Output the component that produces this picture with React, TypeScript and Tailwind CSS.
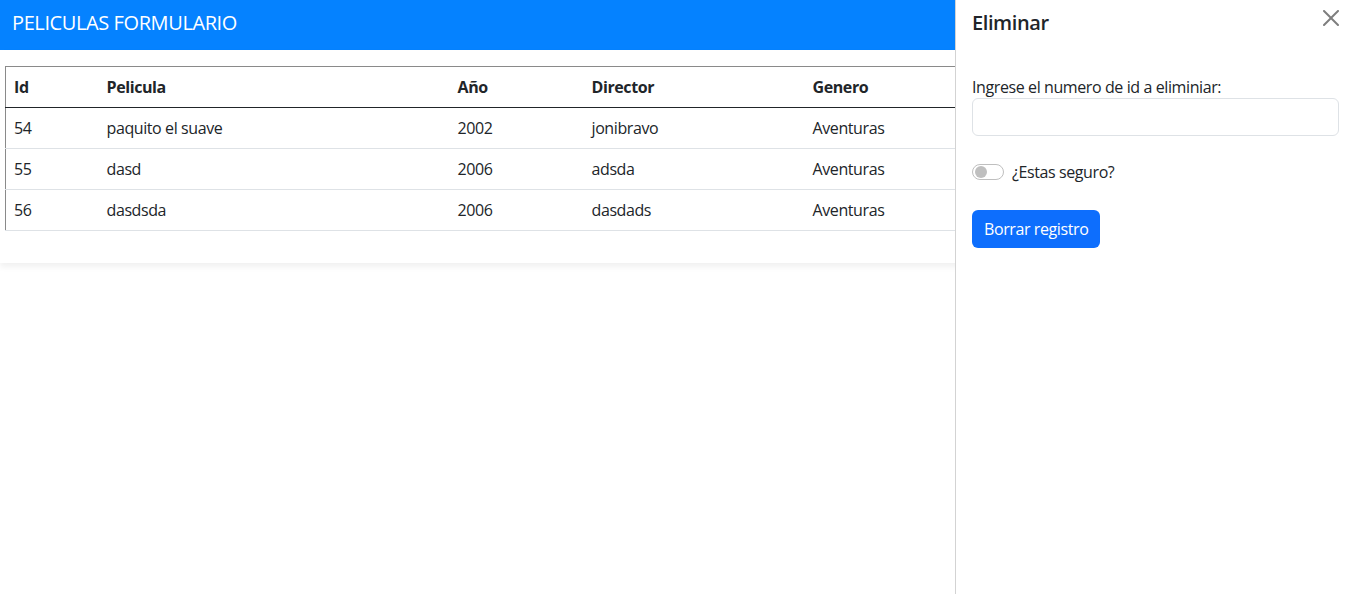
import React from "react";

const rows = [
  { id: "54", p: "paquito el suave", a: "2002", d: "jonibravo", g: "Aventuras" },
  { id: "55", p: "dasd", a: "2006", d: "adsda", g: "Aventuras" },
  { id: "56", p: "dasdsda", a: "2006", d: "dasdads", g: "Aventuras" },
];

export default function App() {
  return (
    <div
      className="relative w-[1355px] h-[594px] overflow-hidden bg-white text-[#212529] tracking-[-0.4px]"
      style={{ fontFamily: '"Segoe UI", "Open Sans", "Noto Sans", sans-serif' }}
    >
      <div className="h-[50px] bg-[#0582ff] flex items-center px-3 pb-[4px]">
        <span className="text-white text-[20px] leading-none">PELICULAS FORMULARIO</span>
      </div>
      <div className="pt-4 pb-4 px-[5px] shadow-[0_4px_6px_rgba(0,0,0,0.06)]">
        <table className="w-[1345px] border-collapse border-t border-l border-[#8a8a8a] text-[16px] mb-4">
          <thead>
            <tr className="border-b border-[#212529] h-[41px]">
              <th className="w-[93px] text-left font-bold px-2">Id</th>
              <th className="w-[351px] text-left font-bold px-2">Pelicula</th>
              <th className="w-[134px] text-left font-bold px-2">Año</th>
              <th className="w-[221px] text-left font-bold px-2">Director</th>
              <th className="text-left font-bold px-2">Genero</th>
            </tr>
          </thead>
          <tbody>
            {rows.map((r) => (
              <tr key={r.id} className="border-b border-[#dee2e6] h-[41px]">
                <td className="px-2">{r.id}</td>
                <td className="px-2">{r.p}</td>
                <td className="px-2">{r.a}</td>
                <td className="px-2">{r.d}</td>
                <td className="px-2">{r.g}</td>
              </tr>
            ))}
          </tbody>
        </table>
      </div>

      <div className="absolute top-0 right-0 w-[400px] h-full bg-white border-l border-[#d3d3d3] flex flex-col">
        <div className="flex items-start justify-between px-4 pt-[8px] h-[46px]">
          <h5 className="text-[20px] font-semibold leading-[30px] mt-0">Eliminar</h5>
          <button className="w-[16px] h-[16px] mt-[2px] mr-0 opacity-50">
            <svg viewBox="0 0 16 16" width="16" height="16" fill="#000">
              <path d="M.293.293a1 1 0 0 1 1.414 0L8 6.586 14.293.293a1 1 0 1 1 1.414 1.414L9.414 8l6.293 6.293a1 1 0 0 1-1.414 1.414L8 9.414l-6.293 6.293a1 1 0 0 1-1.414-1.414L6.586 8 .293 1.707a1 1 0 0 1 0-1.414z" />
            </svg>
          </button>
        </div>
        <div className="px-4 pt-[29px]">
          <label className="block text-[16px] leading-6 mb-0">Ingrese el numero de id a eliminiar:</label>
          <input className="block w-full h-[38px] -mt-[1px] border border-[#dee2e6] rounded-[6px] px-3 outline-none" />
          <div className="flex items-center mt-[24px] h-6">
            <span className="w-[32px] h-[16px] rounded-full border border-[#bfbfbf] flex items-center px-[2px]">
              <span className="w-[12px] h-[12px] rounded-full bg-[#bfbfbf]" />
            </span>
            <span className="ml-2 text-[16px] leading-6">¿Estas seguro?</span>
          </div>
          <button className="mt-[26px] h-[38px] px-3 rounded-[6px] bg-[#0d6efd] text-white text-[16px]">
            Borrar registro
          </button>
        </div>
      </div>
    </div>
  );
}
